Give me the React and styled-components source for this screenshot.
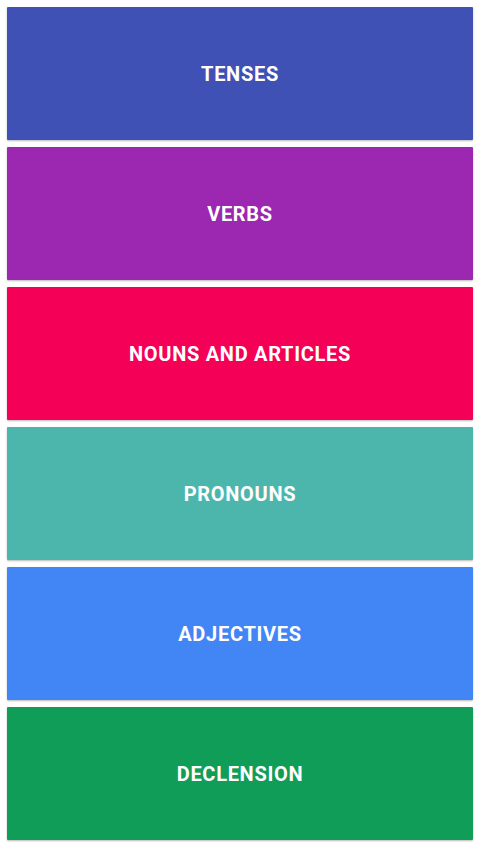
import React from "react";
import styled, { createGlobalStyle } from "styled-components";

const topics = [
  { name: "TENSES", color: "#3f51b5" },
  { name: "VERBS", color: "#9c27b0" },
  { name: "NOUNS AND ARTICLES", color: "#f50057" },
  { name: "PRONOUNS", color: "#4db6ac" },
  { name: "ADJECTIVES", color: "#4285f4" },
  { name: "DECLENSION", color: "#0f9d58" },
];

const GlobalStyle = createGlobalStyle`
  * {
    box-sizing: border-box;
  }

  body {
    margin: 0;
    background: #ffffff;
    font-family: Roboto, "Liberation Sans", sans-serif;
  }
`;

const Page = styled.div`
  display: flex;
  flex-direction: column;
  gap: 7px;
  width: 480px;
  height: 853px;
  padding: 6.5px 7px;
`;

const Card = styled.button`
  display: flex;
  align-items: center;
  justify-content: center;
  width: 100%;
  height: 133px;
  flex-shrink: 0;
  border: none;
  border-radius: 1px;
  padding: 2px 0 0;
  background: ${(props) => props.$color};
  box-shadow: 0 1px 2px rgba(0, 0, 0, 0.28);
  cursor: pointer;
`;

const Title = styled.span`
  color: #ffffff;
  font-family: Roboto, "Liberation Sans", sans-serif;
  font-weight: 700;
  font-size: 20px;
  letter-spacing: 0.7px;
`;

const App = () => {
  return (
    <>
      <GlobalStyle />
      <Page>
        {topics.map((topic) => (
          <Card key={topic.name} $color={topic.color}>
            <Title>{topic.name}</Title>
          </Card>
        ))}
      </Page>
    </>
  );
};

export default App;
